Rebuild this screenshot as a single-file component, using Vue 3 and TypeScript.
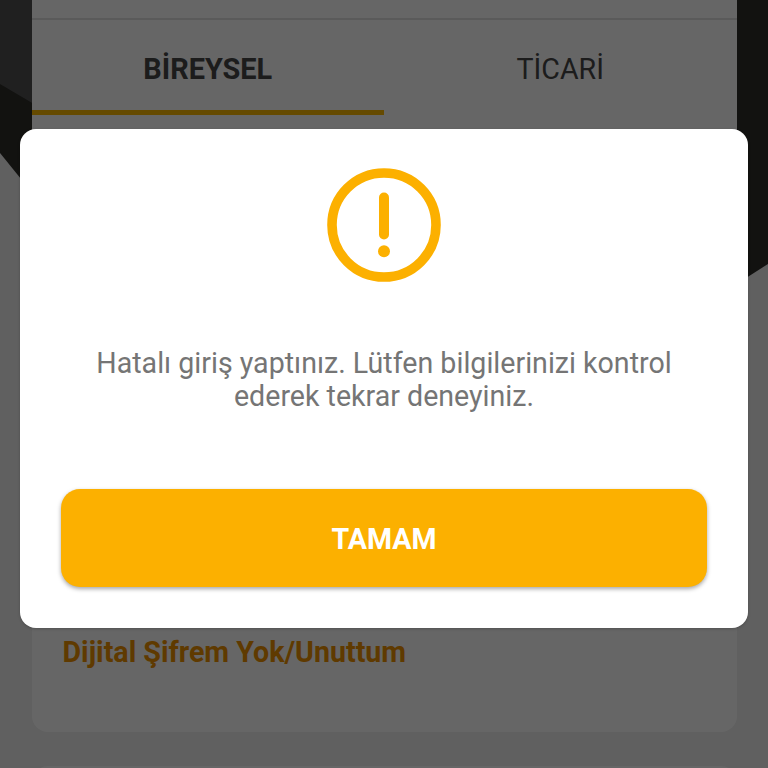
<script setup lang="ts">
import { ref } from 'vue'

type Tab = { id: string; label: string }

const tabs: Tab[] = [
  { id: 'personal', label: 'BİREYSEL' },
  { id: 'business', label: 'TİCARİ' },
]
const active = ref('personal')
const open = ref(true)
</script>

<template>
  <main class="screen">
    <svg class="backdrop" viewBox="0 0 768 768" aria-hidden="true">
      <path d="M0 0H384V400H200L0 153Z" fill="#2d2d2a" />
      <path d="M0 0H384V310L0 84Z" fill="#525252" />
      <path d="M384 0H768V264L384 510Z" fill="#2d2d2a" />
    </svg>

    <div class="content">
      <section class="card">
        <nav class="tabs">
          <button
            v-for="tab in tabs"
            :key="tab.id"
            type="button"
            class="tab"
            :class="{ active: tab.id === active }"
            @click="active = tab.id"
          >
            <span class="tab-label">{{ tab.label }}</span>
          </button>
        </nav>
        <a class="link"><span class="link-text">Dijital Şifrem Yok/Unuttum</span></a>
      </section>
      <section class="card next"></section>
    </div>

    <div v-if="open" class="overlay">
      <div class="dialog" role="alertdialog">
        <svg class="icon" viewBox="0 0 114 114" aria-hidden="true">
          <circle cx="57" cy="57" r="52" fill="none" stroke="#fcb000" stroke-width="9.6" />
          <path d="M57 29.5V66.5" stroke="#fcb000" stroke-width="10" stroke-linecap="round" />
          <circle cx="57" cy="83.2" r="6" fill="#fcb000" />
        </svg>
        <p class="message">
          <span>Hatalı giriş yaptınız. Lütfen bilgilerinizi kontrol</span><br />
          <span>ederek tekrar deneyiniz.</span>
        </p>
        <button type="button" class="confirm" @click="open = false">TAMAM</button>
      </div>
    </div>
  </main>
</template>

<style>
body {
  margin: 0;
}
</style>

<style scoped>
.screen {
  position: relative;
  width: 768px;
  height: 768px;
  overflow: hidden;
  background: #f0f0f0;
  font-family: Roboto, "Liberation Sans", sans-serif;
  font-size: 28.6px;
}

.backdrop {
  position: absolute;
  inset: 0;
  width: 768px;
  height: 768px;
}

.content {
  position: relative;
  display: flex;
  flex-direction: column;
  gap: 34px;
  padding: 0 31.5px;
}

.card {
  box-sizing: border-box;
  display: flex;
  flex-direction: column;
  justify-content: space-between;
  height: 732px;
  padding-top: 18px;
  padding-bottom: 60px;
  background: #fff;
  border-radius: 0 0 16px 16px;
}

.card.next {
  padding: 0;
  border-radius: 16px 16px 0 0;
}

.tabs {
  display: grid;
  grid-template-columns: 1fr 1fr;
  height: 96px;
  border-top: 2px solid #e2e2e2;
}

.tab {
  box-sizing: border-box;
  height: 94.5px;
  margin: 0;
  padding: 8px 0 0;
  border: 0;
  border-bottom: 5px solid transparent;
  background: none;
  color: #484848;
  font: inherit;
}

.tab.active {
  border-bottom-color: #fcb800;
  font-size: 28.9px;
  font-weight: 700;
}

.link {
  padding: 0 31px;
  color: #ed9100;
  font-weight: 700;
  line-height: 40px;
}

.overlay {
  position: absolute;
  inset: 0;
  padding: 129px 20px 0;
  background: rgba(0, 0, 0, 0.6);
}

.dialog {
  box-sizing: border-box;
  display: flex;
  flex-direction: column;
  align-items: center;
  height: 499px;
  padding: 39px 41px 0;
  background: #fff;
  border-radius: 16px;
  box-shadow: 0 1px 3px rgba(0, 0, 0, 0.2);
}

.icon {
  width: 114px;
  height: 114px;
}

.message {
  margin: 64.5px 0 76.5px;
  color: #757575;
  line-height: 33px;
  text-align: center;
  white-space: nowrap;
}

.confirm {
  width: 100%;
  height: 98px;
  padding: 2px 0 0;
  border: 0;
  border-radius: 19px;
  background: #fcb000;
  box-shadow: 0 2px 4px rgba(0, 0, 0, 0.35);
  color: #fff;
  font: inherit;
  font-weight: 700;
}
</style>
